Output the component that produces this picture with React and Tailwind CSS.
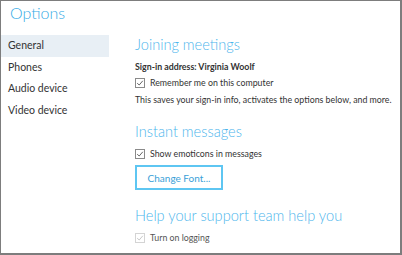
import { useState } from "react";

function CheckBox({ label, disabled }) {
  return (
    <label className="flex items-center gap-[5px]">
      <span
        className={
          "flex h-[10px] w-[10px] items-center justify-center border " +
          (disabled ? "border-[#d4d4d4]" : "border-[#8a8a8a]")
        }
      >
        <svg width="8" height="8" viewBox="0 0 8 8">
          <path
            d="M1.2 4.2 L3.2 6 L6.8 1.8"
            fill="none"
            stroke={disabled ? "#c8c8c8" : "#666"}
            strokeWidth="1"
          />
        </svg>
      </span>
      <span className={disabled ? "text-[#555]" : "text-[#333]"}>{label}</span>
    </label>
  );
}

export default function App() {
  const [active, setActive] = useState("General");
  const tabs = ["General", "Phones", "Audio device", "Video device"];

  return (
    <div
      className="flex h-[255px] w-[402px] flex-col overflow-hidden border-t border-l border-r-2 border-b-2 border-[#7d7d7d] bg-white"
      style={{ fontFamily: "Lato, 'Open Sans', sans-serif" }}
    >
      <h1 className="h-[34px] shrink-0 pl-[9px] pt-[1px] text-[16px] font-light leading-[22px] text-[#35abe6]">
        Options
      </h1>
      <div className="flex flex-1">
        <ul className="w-[108px] text-[10.5px] text-[#333]">
          {tabs.map((t) => (
            <li
              key={t}
              onClick={() => setActive(t)}
              className={
                "flex h-[21.7px] cursor-pointer items-center pl-[7px] " +
                (active === t ? "bg-[#e8eff5]" : "")
              }
            >
              {t}
            </li>
          ))}
        </ul>
        <div className="flex-1 pl-[26px] text-[8.8px] leading-[12px]">
          <h2 className="text-[14.6px] font-light leading-[20px] text-[#4cb5ec]">
            Joining meetings
          </h2>
          <p className="mt-[6px] font-bold text-[#333]">
            Sign-in address: Virginia Woolf
          </p>
          <div className="mt-[4px]">
            <CheckBox label="Remember me on this computer" />
          </div>
          <p className="mt-[5px] text-[#333]">
            This saves your sign-in info, activates the options below, and more.
          </p>
          <h2 className="mt-[16px] text-[14.6px] font-light leading-[20px] text-[#4cb5ec]">
            Instant messages
          </h2>
          <div className="mt-[6px]">
            <CheckBox label="Show emoticons in messages" />
          </div>
          <button className="mt-[5px] flex h-[25px] w-[88px] items-center justify-center border-2 border-[#5ec6f2] text-[10px] text-[#3a9fd8]">
            Change Font...
          </button>
          <h2 className="mt-[16px] text-[14.6px] font-light leading-[20px] text-[#4cb5ec]">
            Help your support team help you
          </h2>
          <div className="mt-[6px]">
            <CheckBox label="Turn on logging" disabled />
          </div>
        </div>
      </div>
    </div>
  );
}
